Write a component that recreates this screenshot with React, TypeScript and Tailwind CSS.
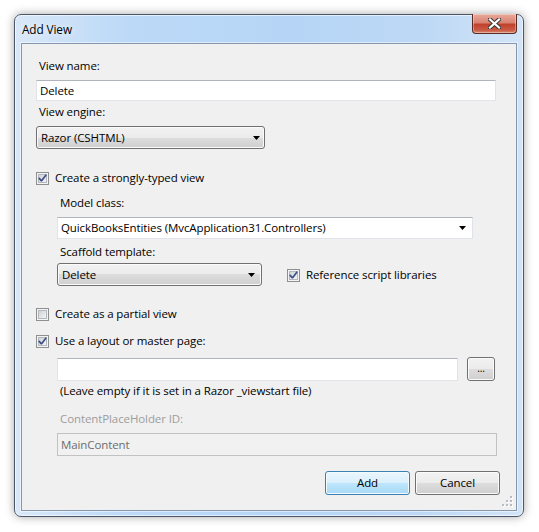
import React from "react";

const FONT = { fontFamily: '"Open Sans", "Noto Sans", sans-serif' };

function Check({ checked }: { checked: boolean }) {
  return (
    <svg width="13" height="13" viewBox="0 0 13 13" className="shrink-0">
      <defs>
        <linearGradient id={checked ? "cbg1" : "cbg0"} x1="0" y1="0" x2="1" y2="1">
          <stop offset="0" stopColor="#cdd0d5" />
          <stop offset="1" stopColor="#f7f7f8" />
        </linearGradient>
      </defs>
      <rect x="0.5" y="0.5" width="12" height="12" fill="#f4f4f4" stroke="#8e8f8f" />
      <rect x="2.5" y="2.5" width="8" height="8" fill={`url(#${checked ? "cbg1" : "cbg0"})`} stroke="#b4b8be" />
      {checked && (
        <path
          d="M3.2 6.4 L5.2 8.6 L5.8 8.6 L9.8 3.2"
          fill="none"
          stroke="#3c4f86"
          strokeWidth="1.7"
          strokeLinejoin="round"
          strokeLinecap="round"
        />
      )}
    </svg>
  );
}

function Arrow() {
  return (
    <svg width="7" height="4" viewBox="0 0 7 4" className="shrink-0">
      <path d="M0 0 H7 L3.5 4 Z" fill="#000" />
    </svg>
  );
}

function CheckRow({ checked, label, className = "" }: { checked: boolean; label: string; className?: string }) {
  return (
    <div className={`flex items-start h-[16px] gap-[6px] ${className}`}>
      <div className="mt-[2px]">
        <Check checked={checked} />
      </div>
      <span className="leading-[16px] whitespace-nowrap">{label}</span>
    </div>
  );
}

const btnNormal =
  "rounded-[3px] border border-[#707070] bg-[linear-gradient(#f2f2f2_0%,#ebebeb_50%,#dddddd_50%,#cfcfcf_100%)] shadow-[inset_0_0_0_1px_#fbfbfb]";
const btnDefault =
  "rounded-[3px] border border-[#3c7fb1] bg-[linear-gradient(#eaf6fd_0%,#d9f0fc_50%,#bee6fd_50%,#a7d9f5_100%)] shadow-[inset_0_0_0_1px_#f4fbff]";
const textbox = "bg-white border border-[#e0e4e9] border-t-[#b0b4bb]";

export default function App() {
  return (
    <div className="w-[539px] h-[532px] bg-white p-[14px] text-[11.5px] tracking-[-0.1px] text-black" style={FONT}>
      <div className="relative w-[510px] h-[503px] rounded-[7px] border border-[#4b5668] bg-[linear-gradient(90deg,#d9e8f8_0%,#bcd9f7_22%,#b6d5f6_55%,#bdd8f5_80%,#d2e4f7_100%)] shadow-[inset_0_0_0_1px_rgba(255,255,255,0.6),0_0_10px_rgba(0,0,0,0.35)] flex flex-col px-[6px] pb-[5px]">
        {/* title bar */}
        <div className="h-[28px] pl-[1px] pt-[6px] leading-[16px] text-[11.8px] [text-shadow:0_0_6px_rgba(255,255,255,0.9)]">
          Add View
        </div>
        {/* close button */}
        <div className="absolute right-[6px] top-[-1px] w-[45px] h-[20px] rounded-b-[4px] border border-[#5a2a24] border-t-0 bg-[linear-gradient(#e9a99a_0%,#d98473_45%,#c2412c_55%,#c95b45_85%,#dc8a70_100%)] shadow-[inset_0_0_0_1px_rgba(255,255,255,0.35)] flex items-center justify-center">
          <svg width="13" height="11" viewBox="0 0 13 11">
            <path d="M2 1.5 L11 9.5 M11 1.5 L2 9.5" stroke="#3a3a3a" strokeWidth="4.2" strokeLinecap="square" />
            <path d="M2 1.5 L11 9.5 M11 1.5 L2 9.5" stroke="#ffffff" strokeWidth="2.2" strokeLinecap="square" />
          </svg>
        </div>
        {/* client area */}
        <div className="relative flex-1 bg-[#f0f0f0] border border-[#8597ad] shadow-[0_0_0_1px_rgba(255,255,255,0.5)] flex flex-col pl-[14px] pt-[14px]">
          <div className="leading-[16px] ml-[3px]">View name:</div>
          <div className={`mt-[6px] w-[460px] h-[21px] ${textbox} flex items-center pl-[3px]`}>Delete</div>

          <div className="leading-[16px] ml-[3px] mt-[3px]">View engine:</div>
          <div className={`mt-[6px] w-[229px] h-[23px] ${btnNormal} flex items-center justify-between pl-[4px] pr-[4px]`}>
            <span>Razor (CSHTML)</span>
            <Arrow />
          </div>

          <CheckRow checked label="Create a strongly-typed view" className="mt-[21px]" />

          <div className="ml-[21px] flex flex-col">
            <div className="leading-[16px] ml-[3px] mt-[9px]">Model class:</div>
            <div className={`mt-[6px] w-[416px] h-[22px] ${textbox} flex items-center justify-between pl-[3px] pr-[6px]`}>
              <span>QuickBooksEntities (MvcApplication31.Controllers)</span>
              <Arrow />
            </div>
            <div className="leading-[16px] ml-[3px] mt-[5px]">Scaffold template:</div>
            <div className="mt-[3px] flex items-center gap-[25px]">
              <div className={`w-[205px] h-[23px] ${btnNormal} flex items-center justify-between pl-[4px] pr-[6px]`}>
                <span>Delete</span>
                <Arrow />
              </div>
              <CheckRow checked label="Reference script libraries" />
            </div>
          </div>

          <CheckRow checked={false} label="Create as a partial view" className="mt-[20px]" />
          <CheckRow checked label="Use a layout or master page:" className="mt-[11px]" />

          <div className="ml-[21px] flex flex-col">
            <div className="mt-[8px] flex items-start">
              <div className={`mt-[1px] w-[401px] h-[23px] ${textbox}`} />
              <div className={`ml-[9px] w-[28px] h-[24px] ${btnNormal} flex items-center justify-center text-[10px] leading-none pb-[2px]`}>
                ...
              </div>
            </div>
            <div className="leading-[16px] ml-[3px] mt-[2px]">(Leave empty if it is set in a Razor _viewstart file)</div>
            <div className="leading-[16px] ml-[3px] mt-[12px] text-[#9d9d9d]">ContentPlaceHolder ID:</div>
            <div className="mt-[6px] w-[440px] h-[23px] border border-[#c2c2c2] bg-[#f1f1f1] flex items-center pl-[3px] text-[#6d6d6d]">
              MainContent
            </div>
          </div>

          <div className="mt-[15px] flex justify-end gap-[5px] pr-[16px]">
            <div className={`w-[85px] h-[24px] ${btnDefault} flex items-center justify-center`}>Add</div>
            <div className={`w-[85px] h-[24px] ${btnNormal} flex items-center justify-center`}>Cancel</div>
          </div>

          {/* resize grip */}
          <svg className="absolute right-[3px] bottom-[3px]" width="11" height="11" viewBox="0 0 11 11">
            {[
              [8, 0],
              [8, 4],
              [4, 4],
              [8, 8],
              [4, 8],
              [0, 8],
            ].map(([x, y], i) => (
              <g key={i}>
                <rect x={x + 1} y={y + 1} width="2" height="2" fill="#ffffff" />
                <rect x={x} y={y} width="2" height="2" fill="#b8bcc2" />
              </g>
            ))}
          </svg>
        </div>
      </div>
    </div>
  );
}
